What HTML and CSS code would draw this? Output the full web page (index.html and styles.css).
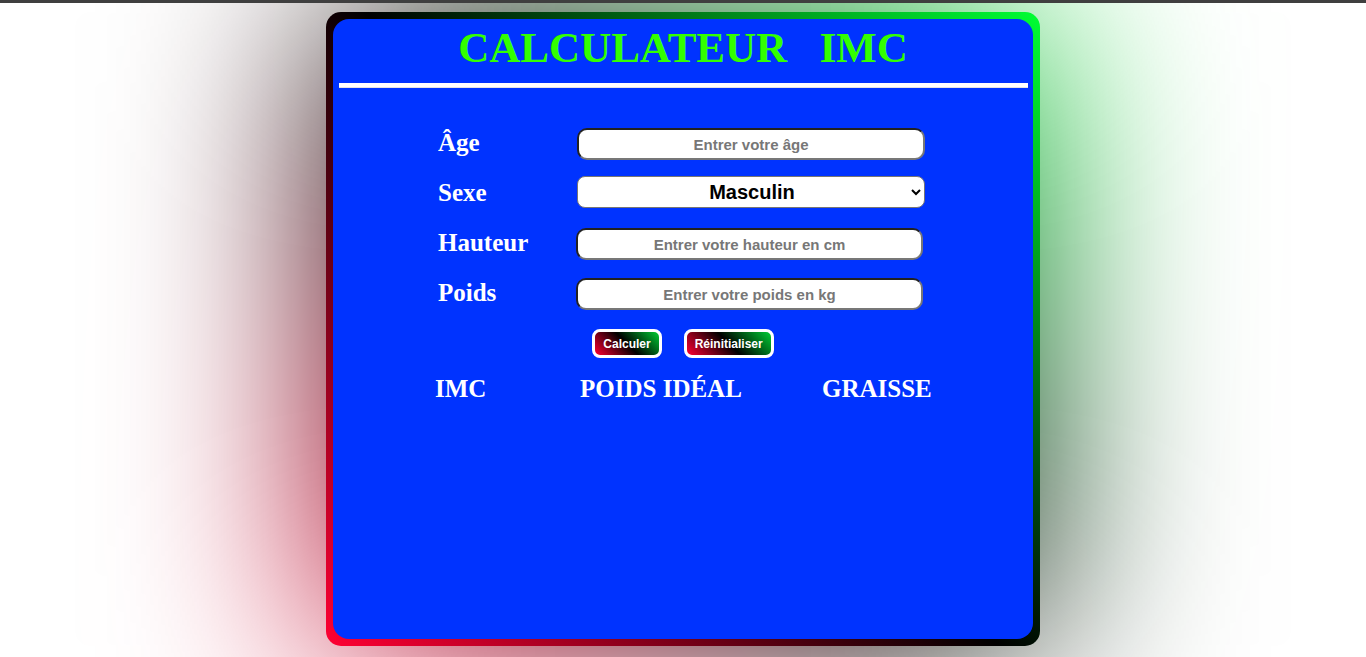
FILE: index.html
```html
<!DOCTYPE html>
<html lang="fr">
<head>
    <meta charset="UTF-8">
    <meta name="viewport" content="width=device-width, initial-scale=1.0">
    <title>Calculateur IMC</title>
    <link rel="stylesheet" href="styles.css">
</head>
<body>
    <div class="top-bar"></div>
    <div class="page">
        <div class="card">
            <div class="card-inner">
                <h1>CALCULATEUR &nbsp; IMC</h1>
                <hr>
                <form class="imc-form" id="imcForm">
                    <label for="age">Âge</label>
                    <input type="text" id="age" placeholder="Entrer votre âge">

                    <label for="sexe">Sexe</label>
                    <select id="sexe">
                        <option>Masculin</option>
                        <option>Féminin</option>
                    </select>

                    <label for="hauteur">Hauteur</label>
                    <input type="text" id="hauteur" placeholder="Entrer votre hauteur en cm">

                    <label for="poids">Poids</label>
                    <input type="text" id="poids" placeholder="Entrer votre poids en kg">
                </form>
                <div class="buttons">
                    <button type="button" class="btn">Calculer</button>
                    <button type="reset" class="btn" form="imcForm">Réinitialiser</button>
                </div>
                <div class="results">
                    <h3>IMC</h3>
                    <h3>POIDS IDÉAL</h3>
                    <h3>GRAISSE</h3>
                </div>
            </div>
        </div>
    </div>
</body>
</html>
```

FILE: styles.css
```css
* {
    margin: 0;
    padding: 0;
    box-sizing: border-box;
}

html, body {
    height: 100%;
}

body {
    font-family: 'Liberation Sans', Arial, sans-serif;
    background: #fff;
    overflow: hidden;
}

.top-bar {
    height: 3px;
    background: #3f3f3f;
}

.page {
    display: flex;
    justify-content: center;
    height: calc(100% - 3px);
    padding-top: 9px;
}

/* gradient frame + blurred glow behind it */
.card {
    position: relative;
    width: 714px;
    height: 634px;
    padding: 7px;
    border-radius: 15px;
    background: linear-gradient(45deg, #ff0033, #000 50%, #00ff33);
}

.card::before {
    content: "";
    position: absolute;
    inset: 0;
    z-index: -1;
    border-radius: 15px;
    background: linear-gradient(45deg, #ff0033, #000 50%, #00ff33);
    filter: blur(105px);
}

.card-inner {
    height: 100%;
    background: #0033ff;
    border-radius: 16px;
    padding-top: 5px;
}

h1 {
    font-family: 'Liberation Serif', 'Times New Roman', serif;
    font-size: 43px;
    line-height: 48px;
    color: #33ff00;
    text-align: center;
    margin-bottom: 11px;
    white-space: pre;
}

hr {
    height: 5px;
    margin: 0 5px 0 6px;
    border: none;
    background: #fff;
    border-bottom: 1px solid #e4e4e4;
}

.imc-form {
    display: grid;
    grid-template-columns: 139px 348px;
    grid-template-rows: 32px 32px 32px 32px;
    row-gap: 18px;
    align-items: center;
    margin: 40px 0 0 105px;
}

.imc-form label {
    font-family: 'Liberation Serif', 'Times New Roman', serif;
    font-weight: bold;
    font-size: 25px;
    line-height: 28px;
    color: #fff;
    padding-bottom: 2px;
}

.imc-form input {
    height: 32px;
    border: 2px solid;
    border-color: #222 #777 #777 #222;
    border-radius: 10px;
    background: #fff;
    font-family: 'Liberation Sans', Arial, sans-serif;
    font-weight: bold;
    font-size: 15px;
    text-align: center;
    outline: none;
}

#hauteur,
#poids {
    margin-left: -1px;
    width: 347px;
}

.imc-form input::placeholder {
    color: #777;
}

.imc-form select {
    height: 32px;
    margin-top: -4px;
    padding-left: 14px;
    border: 1px solid #767676;
    border-radius: 8px;
    background: #fff;
    font-family: 'Liberation Sans', Arial, sans-serif;
    font-weight: bold;
    font-size: 20px;
    color: #000;
    text-align: center;
    text-align-last: center;
}

.buttons {
    display: flex;
    justify-content: center;
    gap: 22px;
    margin-top: 19px;
}

.btn {
    height: 29px;
    padding: 0 8px;
    border: 3px solid #fff;
    border-radius: 8px;
    background: linear-gradient(45deg, #ff0033, #000 50%, #00cc33);
    color: #fff;
    font-family: 'Liberation Sans', Arial, sans-serif;
    font-weight: bold;
    font-size: 12px;
    cursor: pointer;
}

.results {
    display: grid;
    grid-template-columns: 145px 242px auto;
    margin: 16px 0 0 102px;
}

.results h3 {
    font-family: 'Liberation Serif', 'Times New Roman', serif;
    font-size: 25px;
    line-height: 29px;
    color: #fff;
}
```
